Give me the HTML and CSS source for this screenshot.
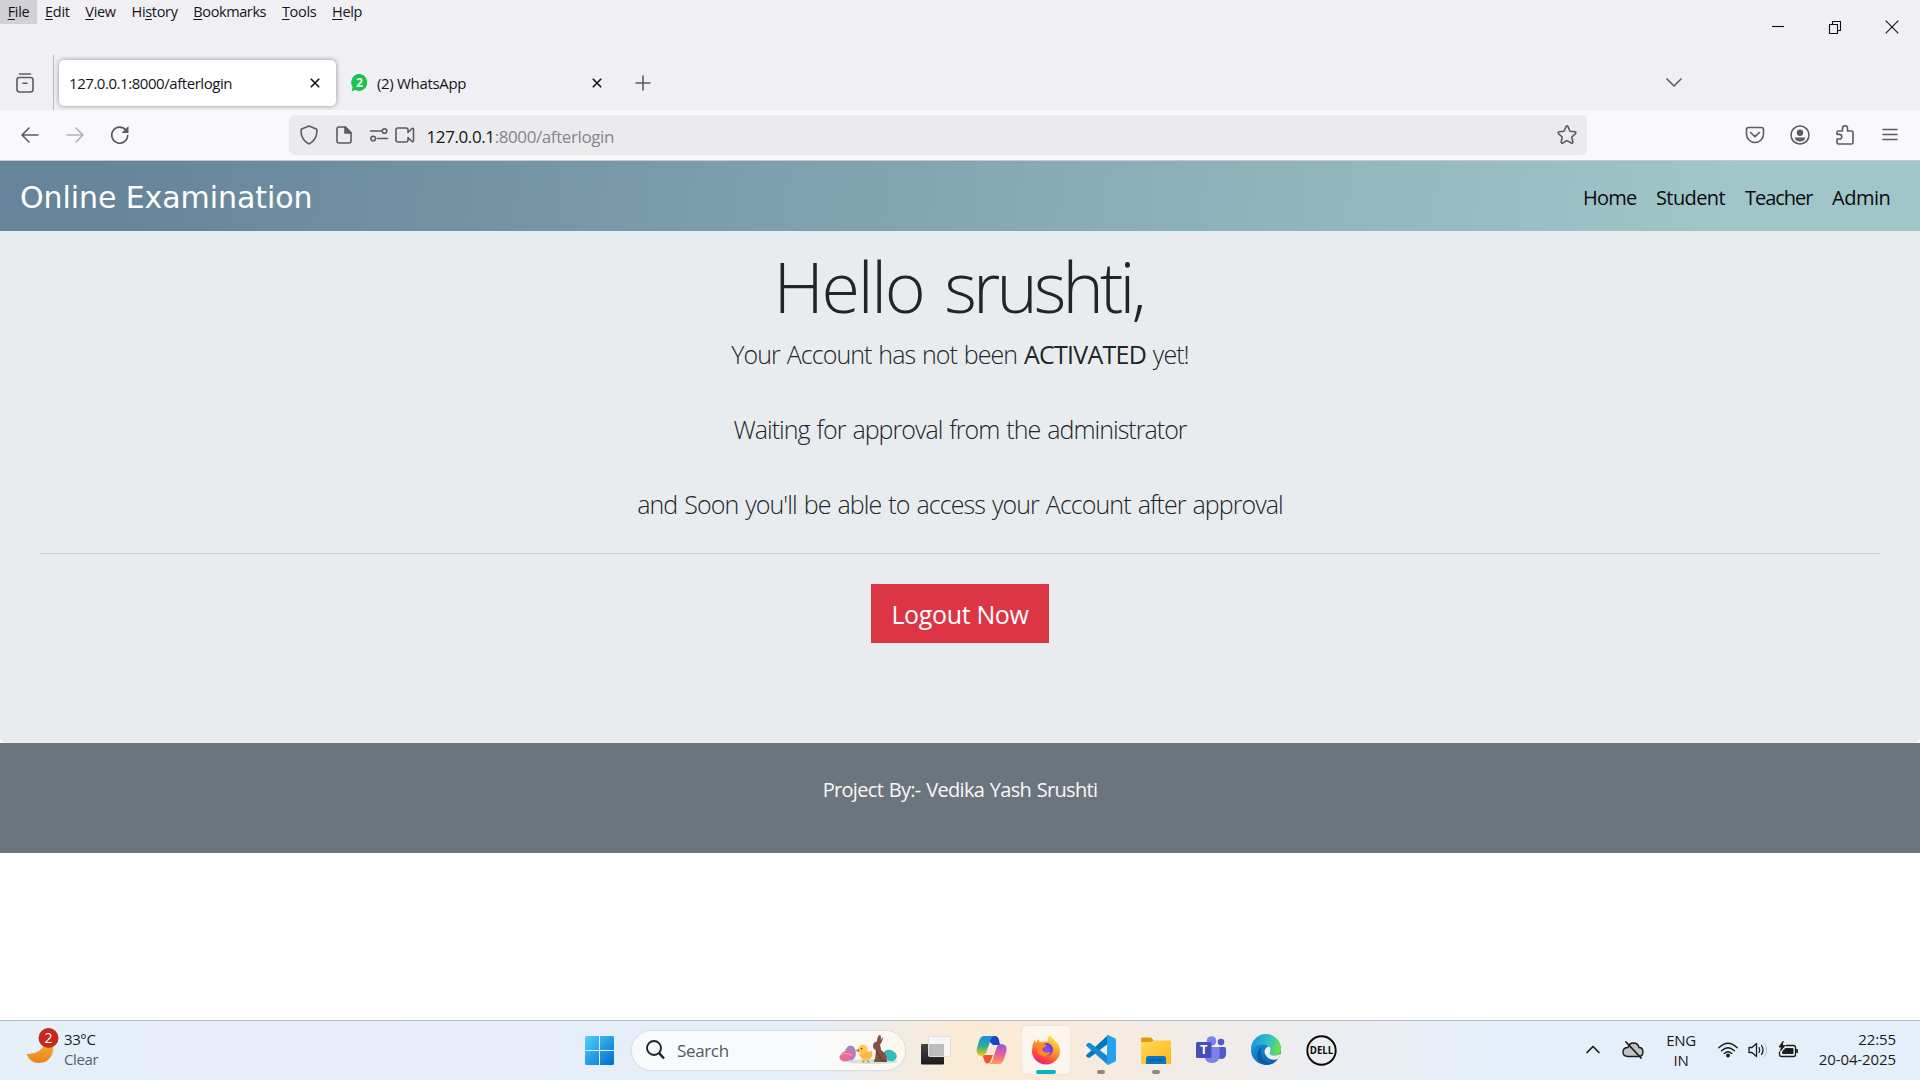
FILE: index.html
```
<!DOCTYPE html>
<html lang="en">
<head>
<meta charset="utf-8">
<title>127.0.0.1:8000/afterlogin</title>
<link rel="stylesheet" href="styles.css">
</head>
<body>
<header class="browser">
  <div class="titlebar">
    <div class="titlebar-left">
      <nav class="menubar">
        <span class="menu menu-active"><u>F</u>ile</span><span class="menu"><u>E</u>dit</span><span class="menu"><u>V</u>iew</span><span class="menu">Hi<u>s</u>tory</span><span class="menu menu-wide"><u>B</u>ookmarks</span><span class="menu"><u>T</u>ools</span><span class="menu"><u>H</u>elp</span>
      </nav>
      <div class="tabs">
        <div class="recent">
          <svg class="line" width="18" height="20" viewBox="0 0 18 20"><path d="M3.500 1h11"/><rect x="1" y="4.500" width="16" height="14.500" rx="2.500"/><path d="M7 10.300h4"/></svg>
        </div>
        <div class="tab tab-active">
          <span class="tab-title tab-url">127.0.0.1:8000/afterlogin</span>
          <svg class="close" width="10" height="10" viewBox="0 0 10 10"><path d="M.8.8l8.400 8.400M9.200.8L.8 9.200"/></svg>
        </div>
        <div class="tab">
          <svg class="favicon" width="18" height="19" viewBox="0 0 18 19"><path d="M9.500 1a8 8.500 0 1 1-4 16L1.600 18.200l1-4A8 8.500 0 0 1 9.500 1z" fill="#1cc24a"/><text x="9.500" y="14" text-anchor="middle">2</text></svg>
          <span class="tab-title">(2) WhatsApp</span>
          <svg class="close" width="10" height="10" viewBox="0 0 10 10"><path d="M.8.8l8.400 8.400M9.200.8L.8 9.200"/></svg>
        </div>
        <svg class="line newtab" width="16" height="16" viewBox="0 0 16 16"><path d="M8 1v14M1 8h14"/></svg>
        <svg class="line alltabs" width="16" height="10" viewBox="0 0 16 10"><path d="M1 1l7 7 7-7"/></svg>
      </div>
    </div>
    <div class="window-controls">
      <svg width="14" height="14" viewBox="0 0 14 14"><path d="M1 6.500h12"/></svg>
      <svg width="14" height="14" viewBox="0 0 14 14"><path d="M1.500 4.500h8v9h-8zM4.500 4.500v-3h8v9h-3"/></svg>
      <svg width="14" height="14" viewBox="0 0 14 14"><path d="M.7.7l12.600 12.600M13.300.7L.7 13.300"/></svg>
    </div>
  </div>
  <div class="toolbar">
    <div class="nav-buttons">
      <svg class="line" width="20" height="18" viewBox="0 0 20 18"><path d="M18 9H2.500M9 2L2 9l7 7"/></svg>
      <svg class="line faded" width="20" height="18" viewBox="0 0 20 18"><path d="M2 9h15.500M11 2l7 7-7 7"/></svg>
      <svg class="line" width="20" height="20" viewBox="0 0 20 20"><path d="M17.700 10.500A8 8 0 1 1 16 5.200"/><path d="M18.500 1v7h-7z" fill="#5b5b66" stroke="none"/></svg>
    </div>
    <div class="urlbar">
      <svg class="line shield" width="18" height="20" viewBox="0 0 18 20"><path d="M9 1l7.300 3q.7.400.7 1.200C17 12 14 16.500 9 19 4 16.500 1 12 1 5.200q0-.8.700-1.200z"/></svg>
      <svg class="line page" width="16" height="18" viewBox="0 0 16 18"><path d="M3 1h6.500L15 6.500V15q0 2-2 2H3q-2 0-2-2V3q0-2 2-2z"/><path d="M9 1v6h6z" fill="#5b5b66"/></svg>
      <svg class="line perms" width="18" height="14" viewBox="0 0 18 14"><path d="M.5 3h11M7.500 10.500h10"/><circle cx="14.500" cy="3" r="2.300"/><circle cx="3.200" cy="10.500" r="2.300"/></svg>
      <svg class="line camera" width="20" height="16" viewBox="0 0 20 16"><path d="M3 1h8q2 0 2 2v2.500L17 1.500q1.500-.5 1.500 1v11q0 1.500-1.500 1L13 10.500V13q0 2-2 2H3q-2 0-2-2V3q0-2 2-2z"/></svg>
      <span class="address"><b>127.0.0.1</b>:8000/afterlogin</span>
      <svg class="line star" width="20" height="20" viewBox="0 0 20 20"><path d="M9 1.600q1-1.600 2 0l2 4.600 5 .6q1.500.5.5 1.800l-3.700 3.400 1 5q0 1.600-1.500 1L10 15.600 5.700 18q-1.500.6-1.500-1l1-5L1.500 8.600q-1-1.300.5-1.800l5-.6z"/></svg>
    </div>
    <div class="actions">
      <svg class="line" width="20" height="20" viewBox="0 0 20 20"><path d="M3.500 2.500h13q2 0 2 2V9A8.500 8.500 0 0 1 1.500 9V4.500q0-2 2-2z"/><path d="M5.500 7.500L10 11.700l4.500-4.200"/></svg>
      <svg class="line" width="20" height="20" viewBox="0 0 20 20"><circle cx="10" cy="10" r="9"/><circle cx="10" cy="7.700" r="3.200" fill="#5b5b66" stroke="none"/><path d="M4.600 12.500h10.800q-1 4-5.400 4t-5.400-4z" fill="#5b5b66" stroke="none"/></svg>
      <svg class="line" width="20" height="20" viewBox="0 0 20 20"><path d="M3.500 6H7.500V3.200a2.500 2.500 0 0 1 5 0V6h4q1.500 0 1.500 1.500v10q0 1.500-1.500 1.500h-13Q2 19 2 17.500V14h2.500a2.300 2.300 0 0 0 0-4.600H2V7.500Q2 6 3.500 6z"/></svg>
      <svg class="line" width="20" height="20" viewBox="0 0 20 20"><path d="M3 4.500h14M3 9.500h14M3 14.500h14"/></svg>
    </div>
  </div>
</header>

<main class="page-view">
  <nav class="navbar">
    <span class="brand">Online Examination</span>
    <div class="links">
      <span class="link-home">Home</span><span class="link-student">Student</span><span class="link-teacher">Teacher</span><span class="link-admin">Admin</span>
    </div>
  </nav>
  <section class="jumbotron">
    <h1>Hello <span class="name">srushti,</span></h1>
    <p class="lead lead-first">Your Account has not been <b>ACTIVATED</b> yet!</p>
    <p class="lead">Waiting for approval from the administrator</p>
    <p class="lead lead-long">and Soon you'll be able to access your Account after approval</p>
    <hr>
    <span class="logout">Logout Now</span>
  </section>
  <footer class="footer">Project By:- Vedika Yash Srushti</footer>
</main>

<div class="taskbar">
  <div class="weather">
    <svg width="34" height="38" viewBox="0 0 34 38"><defs><linearGradient id="moon" x1="0" y1="0" x2="0" y2="1"><stop offset="0" stop-color="#f0b52c"/><stop offset="1" stop-color="#ee7d20"/></linearGradient></defs><path d="M26 14c4 10-2 21-13 21Q4 35 .5 26 14 27 19 15z" fill="url(#moon)"/><circle cx="22.500" cy="10" r="10" fill="#c42b1c"/><text class="badge-text" x="22.500" y="15" text-anchor="middle">2</text></svg>
    <div class="weather-text"><span>33°C</span><span class="muted">Clear</span></div>
  </div>
  <div class="apps">
    <div class="app start">
      <svg width="29" height="29" viewBox="0 0 29 29"><defs><linearGradient id="win" x1="0" y1="0" x2="1" y2="1"><stop offset="0" stop-color="#4fd2fb"/><stop offset="1" stop-color="#0069d0"/></linearGradient></defs><path d="M1.500 0H14v14H0V1.500Q0 0 1.500 0zM15 0h12.500Q29 0 29 1.500V14H15zM0 15h14v14H1.500Q0 29 0 27.500zM15 15h14v12.500q0 1.500-1.500 1.500H15z" fill="url(#win)"/></svg>
    </div>
    <div class="search">
      <svg width="19" height="20" viewBox="0 0 19 20" fill="none" stroke="#222"><circle cx="8" cy="8" r="7" stroke-width="1.900"/><path d="M13 13l5 5.500" stroke-width="2.500"/></svg>
      <span class="search-text">Search</span>
      <svg class="easter" width="60" height="30" viewBox="0 0 60 30">
        <ellipse cx="33" cy="26.500" rx="26" ry="2.500" fill="#cfe6d6"/>
        <ellipse cx="11.500" cy="18" rx="5.500" ry="7.500" fill="#a487c4"/>
        <ellipse cx="7.500" cy="21" rx="7.300" ry="5" fill="#e96a9d" transform="rotate(-22 7.500 21)"/>
        <path d="M2 20q5-3.500 11 .5" stroke="#f8a6c3" fill="none"/>
        <ellipse cx="51" cy="20.500" rx="7" ry="5.500" fill="#35b9bb" transform="rotate(22 51 20.500)"/>
        <circle cx="24" cy="14.500" r="4.800" fill="#fdc85a"/><path d="M20 18q3 2.500 7-1l6-1q2 8.500-6 9-6-.5-7-7z" fill="#fbb845"/><path d="M20 14l-3 1.500 3 1.500zM25 25v2h-2M28.500 25v2h2" fill="#ee7b25" stroke="#ee7b25" stroke-width=".8"/><circle cx="22.500" cy="13.500" r=".8" fill="#432"/>
        <path d="M34 11q0-4 4-4.500 0-6 3-6.500 1.500 1 .8 5Q45 0 44 3q-1 4-3 7 1 3 1 5 6 4 5.500 9 1 1 .5 3H35q-1-1 1-3l1-9q-3-1-3-4z" fill="#815244"/><path d="M37 15q3 5 6 11h4" stroke="#61382c" fill="none"/>
      </svg>
    </div>
    <div class="app taskview">
      <svg width="30" height="29" viewBox="0 0 30 29"><defs><linearGradient id="tv" x1="0" y1="0" x2="0" y2="1"><stop offset="0" stop-color="#444"/><stop offset="1" stop-color="#1b1b1b"/></linearGradient></defs><rect y="8" width="23" height="20.500" rx="1" fill="url(#tv)"/><rect x="7.500" y=".5" width="22" height="20" rx="1" fill="#f6f6f8" stroke="#e2dfdc"/><path d="M8 8h15v12H8z" fill="#bdbdbd"/></svg>
    </div>
    <div class="app">
      <svg width="31" height="28" viewBox="0 0 31 28"><defs><linearGradient id="cp1" x1="0" y1="0" x2="0" y2="1"><stop offset="0" stop-color="#198fe8"/><stop offset=".5" stop-color="#2bb08e"/><stop offset="1" stop-color="#f5c71b"/></linearGradient><linearGradient id="cp2" x1="0" y1="0" x2="0" y2="1"><stop offset="0" stop-color="#8f56e8"/><stop offset=".5" stop-color="#e85a9b"/><stop offset="1" stop-color="#ff9f55"/></linearGradient></defs>
        <path d="M9 19h8l-2 5q-1 3.500-4 3.500-2 0-3-4L6 18z" fill="#f0552e"/><path d="M8 0h11q3 0 4 4l1 5h-7z" fill="#1746c8"/>
        <path d="M8 0h10q-3 1-4.500 7l-3 9Q9.500 20 6 20 0 20 .7 13.500L3 5Q4.500 0 8 0z" fill="url(#cp1)"/><path d="M23 28H13q3-1 4.500-7l3-9q1-4 5-4 6 .5 5 7L28 23q-1.500 5-5 5z" fill="url(#cp2)"/></svg>
    </div>
    <div class="app app-current">
      <svg width="30" height="30" viewBox="0 0 30 30"><defs><linearGradient id="ff" x1=".8" y1="0" x2=".3" y2="1"><stop offset="0" stop-color="#fff044"/><stop offset=".4" stop-color="#ffa42b"/><stop offset=".75" stop-color="#ff4b42"/><stop offset="1" stop-color="#e6197f"/></linearGradient><radialGradient id="ffp"><stop offset="0" stop-color="#8c55f5"/><stop offset="1" stop-color="#6437cf"/></radialGradient></defs><path d="M17 6q-.5-4 2-6 1.500 3.500 5 5.500Q25 7 25.500 8l.5-1q3 4 3 9A14 13.500 0 0 1 1 16Q.8 10 3.500 5l1.500 3 2-4 2 3z" fill="url(#ff)"/><circle cx="15.500" cy="14.500" r="6.500" fill="url(#ffp)"/><path d="M4 10q4-3 8-1 2 0 3.500 1-1 2.500-4 3 0 4 4 4.500 3 0 4.500-1-2 5-7 4.500Q6 20 6 14z" fill="#ff8728"/></svg>
      <i class="running running-current"></i>
    </div>
    <div class="app">
      <svg width="30" height="30" viewBox="0 0 30 30"><path d="M22 0L2 18.500q-2 1-2 2.500 2 2.500 4 1.500L23 8z" fill="#0277be"/><path d="M22 30L1 11.500q-1.500-1-.5-2Q2 7 4 8l19 14z" fill="#128bd2"/><path d="M22 0l7 3.300q1 .5 1 1.700v20q0 1.200-1 1.700L22 30q-1.500-.5-1-2V2q-.5-1.500 1-2z" fill="#24a3ef"/></svg>
      <i class="running"></i>
    </div>
    <div class="app">
      <svg width="30" height="27" viewBox="0 0 30 27"><defs><linearGradient id="fo" x1="0" y1="0" x2="1" y2="1"><stop offset="0" stop-color="#ffd75e"/><stop offset="1" stop-color="#fbb914"/></linearGradient></defs><path d="M1.500.5H10L13 3.500h-1V7H0V2Q0 .5 1.500.5z" fill="#dc9c0a"/><path d="M0 5h10l3-1.500h16q1 0 1 1V27H1q-1 0-1-1z" fill="url(#fo)"/><path d="M7.500 19h15q2.500 0 2.500 2.500V27H5v-5.500Q5 19 7.500 19z" fill="#0b75c5"/><path d="M8 23h14" stroke="#07529a" stroke-width="1.300"/></svg>
      <i class="running"></i>
    </div>
    <div class="app">
      <svg width="30" height="28" viewBox="0 0 30 28"><circle cx="25" cy="6" r="3.300" fill="#5059c9"/><path d="M20 11h8.500Q30 11 30 12.500V18q0 5-5 5-3 0-5-2z" fill="#5059c9"/><circle cx="15.500" cy="5" r="4.800" fill="#7b83eb"/><path d="M9 11h13q1.500 0 1.500 1.500V19q0 8-7.500 8t-7-8z" fill="#7b83eb"/><rect y="6" width="15.500" height="16" rx="1.500" fill="#464eb8"/><text class="teams-text" x="7.700" y="18.300" text-anchor="middle">T</text></svg>
    </div>
    <div class="app">
      <svg width="30" height="30" viewBox="0 0 30 30"><defs><linearGradient id="ed" x1="0" y1=".2" x2="1" y2=".4"><stop offset="0" stop-color="#1593dc"/><stop offset=".6" stop-color="#33c1c9"/><stop offset="1" stop-color="#66e04e"/></linearGradient><linearGradient id="ed2" x1="0" y1="0" x2="1" y2="1"><stop offset="0" stop-color="#1ba0e0"/><stop offset="1" stop-color="#0a55ac"/></linearGradient></defs><circle cx="15" cy="15" r="15" fill="url(#ed2)"/><path d="M0 14A15 15 0 0 1 30 14q0 6-6 6.500-5 .5-5.500-2 2-2 .5-5Q16 9 10 9.500 3 10 0 16z" fill="url(#ed)"/><path d="M18.500 11.500q2 4 0 7 1 2.500 5.500 2 3 0 6-2-1 3-3 5.500-7 2-11-2-4.500-5-1-9 1-1.500 3.500-1.500z" fill="#eeeef1"/><path d="M11 12q-4 10 5 15 5 2 10-2-4 5-11 5-8-1-9-9 0-6 5-9z" fill="#0c59a4"/></svg>
    </div>
    <div class="app">
      <svg width="31" height="31" viewBox="0 0 31 31"><circle cx="15.500" cy="15.500" r="14.200" fill="none" stroke="#080808" stroke-width="1.900"/><text class="dell-text" x="3.800" y="19.300" textLength="23.500" lengthAdjust="spacingAndGlyphs">DELL</text></svg>
    </div>
  </div>
  <div class="tray">
    <svg class="tray-icon up" width="14" height="9" viewBox="0 0 14 9"><path d="M1 7.500L7 1.500l6 6" stroke-width="1.700"/></svg>
    <svg class="tray-icon cloud" width="22" height="18" viewBox="0 0 22 18"><path d="M6 15.500Q1 15.500 1 11t5-4.500Q7 2 11.500 2T17 6.500q4 0 4 4.500t-4.500 4.500z" fill="#bfc3c6" stroke-width="1.400"/><path d="M4 1l15 16" stroke-width="1.800"/></svg>
    <div class="lang"><span>ENG</span><span>IN</span></div>
    <svg class="tray-icon wifi" width="20" height="16" viewBox="0 0 20 16"><path d="M.8 5.800Q10-3.300 19.200 5.800M3.600 8.800Q10 2.700 16.400 8.800M6.300 11.500Q10 8 13.700 11.500" stroke-width="1.400"/><circle cx="10" cy="13.500" r="1.900" fill="#1b1b1b" stroke="none"/></svg>
    <svg class="tray-icon speaker" width="20" height="16" viewBox="0 0 20 16"><path d="M1 5.500h3l4.500-4v13L4 10.500H1z" stroke-width="1.300"/><path d="M11 5.500q1.500 2.500 0 5M13.500 3.500q3 4.500 0 9" stroke-width="1.300"/><path d="M16.500 1.500q4.500 6.500 0 13" stroke="#b4bcc4"/></svg>
    <svg class="tray-icon battery" width="21" height="18" viewBox="0 0 21 18"><path d="M8 4.500h7.500q2 0 2 2v7q0 2-2 2H3.500q-2 0-2-2V11" stroke-width="1.300"/><path d="M7.500 7.500h7.500v5H4.500V11zM18.500 8.500h1v3h-1zM5 .5L1 6h2.500L2.500 10 7 4.500H4.500z" fill="#1b1b1b" stroke-width=".9"/></svg>
    <div class="clock"><span>22:55</span><span>20-04-2025</span></div>
  </div>
</div>
</body>
</html>
```
FILE: styles.css
```
* { box-sizing: border-box; }
html, body { height: 100%; }
body {
  margin: 0;
  display: flex;
  flex-direction: column;
  overflow: hidden;
  background: #fff;
  color: #15141a;
  font-family: "Open Sans", "Noto Sans", sans-serif;
}
svg { display: block; flex: none; overflow: visible; }
.line { fill: none; stroke: #5b5b66; stroke-width: 1.6; stroke-linecap: round; stroke-linejoin: round; }

/* Browser chrome */
.browser { flex: none; }
.titlebar { display: flex; height: 110px; background: #f0f0f4; }
.titlebar-left { flex: 1; display: flex; flex-direction: column; justify-content: space-between; }
.menubar { display: flex; height: 24px; font-size: 14.5px; line-height: 23px; letter-spacing: -.33px; }
.menu { padding: 0 8.1px 0 7.7px; white-space: nowrap; }
.menu-active { background: #d1d1d5; }
.menu-wide { letter-spacing: -.4px; }
.menu u { text-underline-offset: 2px; text-decoration-thickness: 1px; }
.tabs { display: flex; align-items: center; height: 55px; }
.recent { display: flex; align-items: center; width: 54px; height: 55px; padding-left: 16px; border-right: 1px solid #b9b9bf; }
.tab { display: flex; align-items: center; width: 277px; height: 46px; margin-left: 5px; padding: 0 16.5px 0 10px; border-radius: 5px; }
.tab-active { background: #fff; box-shadow: 0 0 5px rgba(0, 0, 0, .4); }
.favicon { margin: 0 9px 0 -1px; }
.favicon text { font: 700 12px "Open Sans", sans-serif; fill: #fff; }
.tab-title { font-size: 15px; letter-spacing: -.32px; white-space: nowrap; }
.tab-url { letter-spacing: -.45px; }
.close { margin-left: auto; stroke: #15141a; stroke-width: 1.6; }
.newtab { margin-left: 17px; }
.alltabs { margin-left: auto; margin-right: 67px; }
.window-controls { display: flex; align-items: center; width: 171px; height: 54px; }
.window-controls svg { margin: 0 21px 0 22px; fill: none; stroke: #111; stroke-width: 1.1; }
.toolbar { display: flex; align-items: center; height: 51px; padding: 0 20px; background: #f9f9fb; border-bottom: 1px solid #c9c9c9; }
.nav-buttons { display: flex; align-items: center; gap: 25px; width: 269px; }
.faded { opacity: .45; }
.urlbar { display: flex; align-items: center; width: 1298px; height: 40px; padding: 0 10px 0 11px; background: #ebebed; border-radius: 6px; }
.page { margin-left: 18px; }
.perms { margin-left: 18px; }
.camera { margin-left: 7px; }
.address { margin-left: 11.500px; padding-top: 4px; font-size: 17px; line-height: 36px; letter-spacing: -.4px; color: #85858a; }
.address b { font-weight: 400; color: #15141a; }
.star { margin-left: auto; }
.actions { display: flex; align-items: center; gap: 25px; margin-left: auto; }

/* Web page */
.page-view { flex: 1; font-size: 20px; }
.navbar { display: flex; align-items: center; justify-content: space-between; height: 70px; padding: 0 30px 0 20px; background: linear-gradient(97deg, #66849a 5%, #a0c6c9 90%); }
.brand { font: 30px/66px "DejaVu Sans", Verdana, sans-serif; letter-spacing: -.08px; color: #fff; padding-top: 4px; }
.links { display: flex; gap: 20px; line-height: 30px; padding-top: 3px; color: #0b0b0b; }
.link-home { width: 53px; letter-spacing: -.75px; }
.link-student { width: 69px; letter-spacing: -.6px; }
.link-teacher { width: 67px; letter-spacing: -1.05px; }
.link-admin { width: 58px; letter-spacing: -.5px; }
.jumbotron { display: flex; flex-direction: column; align-items: center; height: 512px; padding: 12px 39px 0; background: #e9ecef; color: #212529; border-radius: 0 0 6px 6px; }
h1 { margin: 0 4px 7px 0; font-size: 70px; font-weight: 300; line-height: 86px; letter-spacing: -2.3px; word-spacing: 5px; }
.name { letter-spacing: -3.9px; }
.lead { margin: 0 0 37.5px; font-size: 25px; font-weight: 300; line-height: 37.5px; letter-spacing: -.97px; word-spacing: 1.4px; white-space: pre; }
.lead-first { letter-spacing: -.94px; word-spacing: 1.3px; }
.lead b { font-weight: 400; letter-spacing: -.76px; }
.lead-long { margin-bottom: 29px; letter-spacing: -.94px; word-spacing: 1.5px; }
hr { width: 100%; height: 1px; margin: 0 0 30px; border: 0; background: #ced2d5; }
.logout { width: 178px; height: 59px; padding-top: 12px; background: #dc3545; color: #fff; font-size: 25px; line-height: 37px; letter-spacing: -.35px; text-align: center; }
.footer { height: 110px; padding-top: 32px; background: #6c757d; color: #f8f9fa; line-height: 30px; letter-spacing: -.67px; word-spacing: 1px; text-align: center; }

/* Windows taskbar */
.taskbar {
  flex: none;
  display: flex;
  height: 60px;
  border-top: 1px solid #b5b8c0;
  background: linear-gradient(90deg, #e4f0f8 0, #e7eefa 9%, #e6eefa 42%, #faebd5 50%, #fbebd7 53%, #f3ece5 60%, #ecedf0 68%, #e6eff9 78%, #e4effa 100%);
  color: #1b1b1b;
  font-size: 15px;
}
.weather { display: flex; width: 571px; padding: 7px 0 0 26px; gap: 4px; }
.weather-text, .lang, .clock { display: flex; flex-direction: column; line-height: 20px; }
.weather-text { padding-top: 1px; letter-spacing: -.4px; }
.muted { color: #5a6068; }
.badge-text { font: 14px "Open Sans", sans-serif; fill: #fff; }
.apps { display: flex; align-items: center; padding-bottom: 1px; }
.app { position: relative; display: flex; align-items: center; justify-content: center; width: 48px; height: 48px; margin: 0 3.5px; }
.start { margin: 0 9px 0 4px; }
.taskview { margin-left: 7px; }
.app-current { background: #fcf6ef; border-radius: 5px; box-shadow: 0 0 1px 1px #efe4d8; }
.running { position: absolute; left: 20px; bottom: 0; width: 8px; height: 4px; border-radius: 2px; background: #8a8886; }
.running-current { left: 14px; width: 20px; background: #00b7c3; }
.search { display: flex; align-items: center; width: 273px; height: 39px; padding: 0 6px 0 14px; border-radius: 20px; background: linear-gradient(90deg, #f8fbfe 60%, #fdf7ee); box-shadow: 0 0 1px 1px #d8dce4; }
.search-text { margin-left: 12px; font-size: 17px; letter-spacing: -.35px; color: #575757; }
.easter { margin-left: auto; }
.teams-text { font: 700 13px "Open Sans", sans-serif; fill: #fff; }
.dell-text { font: 700 10px "Open Sans", sans-serif; fill: #080808; }
.tray { display: flex; align-items: center; margin-left: auto; padding: 0 24px 2px 0; }
.tray-icon { fill: none; stroke: #1b1b1b; stroke-linecap: round; stroke-linejoin: round; }
.cloud { margin-left: 22px; }
.lang { width: 34px; margin-left: 20px; text-align: center; letter-spacing: -.3px; }
.wifi { margin-left: 20px; }
.speaker { margin-left: 10px; }
.battery { margin-left: 10px; }
.clock { width: 97px; text-align: right; letter-spacing: -.1px; padding-bottom: 1px; }
```
